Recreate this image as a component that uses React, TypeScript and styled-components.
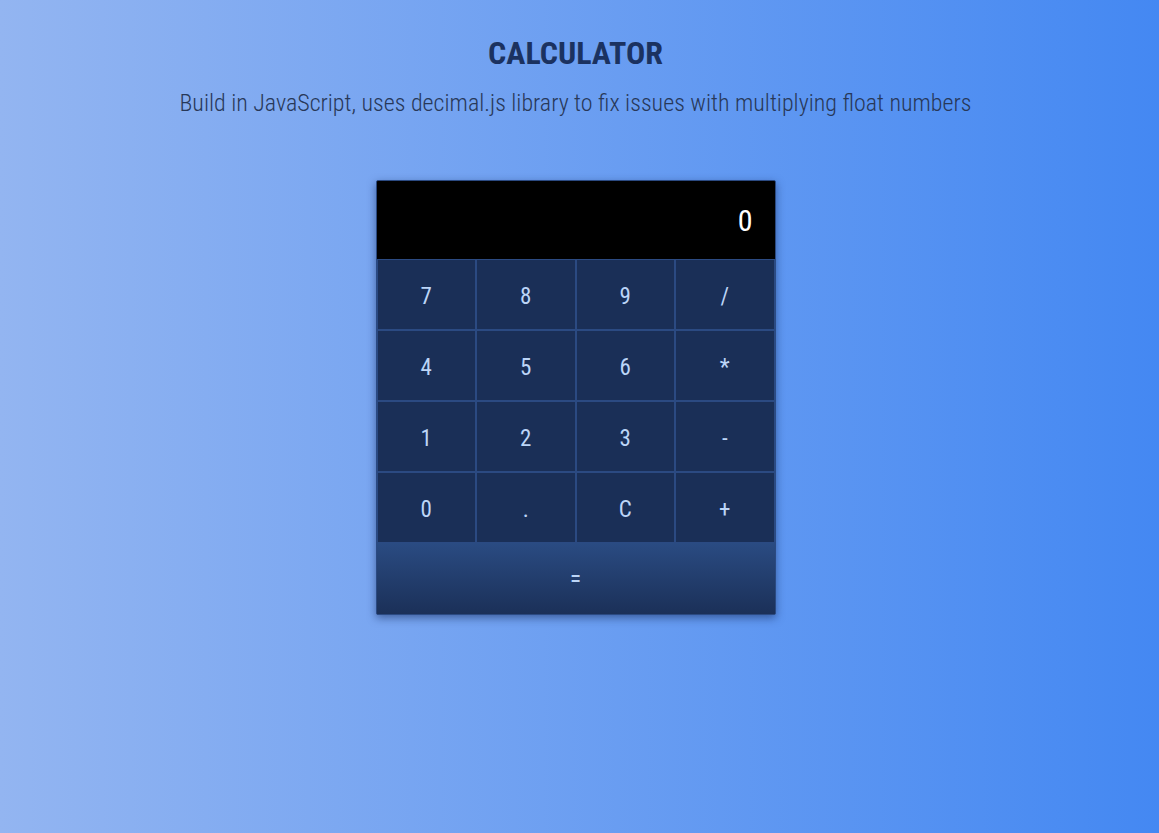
import React from "react";
import styled, { createGlobalStyle } from "styled-components";

const Global = createGlobalStyle`
  html, body { margin: 0; padding: 0; }
  body {
    min-height: 833px;
    background: linear-gradient(to right, #93b5f1 0%, #4488f2 100%);
    font-family: "Roboto Condensed", Roboto, "Liberation Sans", sans-serif;
  }
`;

const Page = styled.div`
  display: flex;
  flex-direction: column;
  align-items: center;
  padding: 34px 8px 0 0;
  min-height: 833px;
  box-sizing: border-box;
`;

const Title = styled.h1`
  margin: 0;
  font-size: 32px;
  font-weight: 700;
  color: #1b3260;
  line-height: 38px;
`;

const Subtitle = styled.p`
  margin: 16px 0 0;
  font-size: 24px;
  font-weight: 300;
  color: #283858;
  line-height: 30px;
`;

const Calc = styled.div`
  margin-top: 62px;
  width: 400px;
  box-sizing: border-box;
  background: #1b2f57;
  border: 1px solid #2b4a82;
  border-radius: 2px;
  box-shadow: 0 3px 8px rgba(20, 40, 90, 0.55);
  overflow: hidden;
`;

const Display = styled.div`
  height: 78px;
  background: #000;
  color: #fff;
  display: flex;
  align-items: center;
  justify-content: flex-end;
  padding-right: 22px;
  font-size: 30px;
`;

const Keys = styled.div`
  display: grid;
  grid-template-columns: repeat(4, 1fr);
`;

const Key = styled.button`
  height: 71px;
  border: 1px solid #2b4a82;
  background: #1a2f57;
  color: #bcd5f7;
  font-family: "Roboto Condensed", Roboto, "Liberation Sans", sans-serif;
  font-size: 23px;
  padding: 3px 0 0;
  cursor: pointer;
`;

const Equals = styled.button`
  grid-column: 1 / span 4;
  height: 71px;
  border: none;
  background: linear-gradient(to bottom, #2a4b82 0%, #1b3058 100%);
  color: #bcd5f7;
  font-family: "Roboto Condensed", Roboto, "Liberation Sans", sans-serif;
  font-size: 23px;
  padding: 2px 0 0;
`;

const keys = ["7", "8", "9", "/", "4", "5", "6", "*", "1", "2", "3", "-", "0", ".", "C", "+"];

export default function App() {
  return (
    <>
      <Global />
      <Page>
        <Title>CALCULATOR</Title>
        <Subtitle>Build in JavaScript, uses decimal.js library to fix issues with multiplying float numbers</Subtitle>
        <Calc>
          <Display>0</Display>
          <Keys>
            {keys.map((k) => (
              <Key key={k}>{k}</Key>
            ))}
            <Equals>=</Equals>
          </Keys>
        </Calc>
      </Page>
    </>
  );
}
